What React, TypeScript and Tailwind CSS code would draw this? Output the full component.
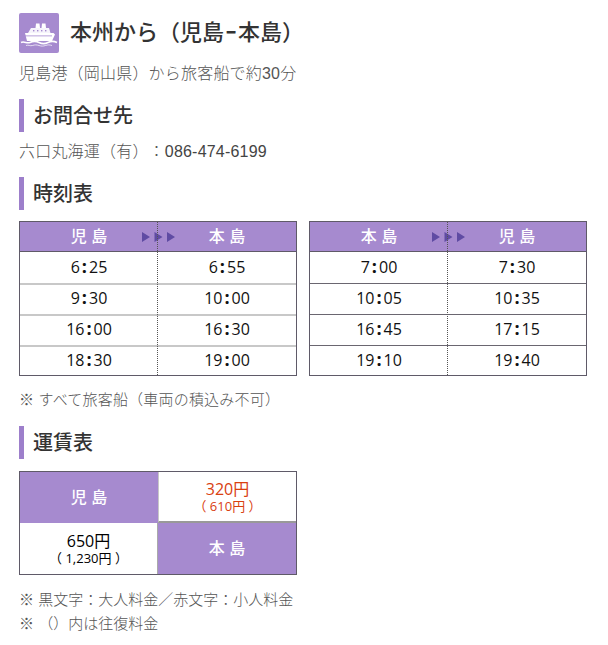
const cjk = "font-['Liberation_Sans','Noto_Sans_CJK_JP',sans-serif]";
const tableFont = "font-['Open_Sans','Noto_Sans_CJK_JP',sans-serif]";

const ShipIcon = () => (
  <svg viewBox="0 0 40 40" className="h-[40px] w-[40px]">
    <rect width="40" height="40" rx="2" fill="#a68acf" />
    <g fill="#fff">
      <path d="M17 10.500h3.500l.5 4.500h-4.500zM23 10.500h3.500l.5 4.500h-4.500z" />
      <path d="M12 15h18l1.500 5H9z" opacity="0.9" />
      <path d="M6 20h28.500l1.500 1.500-3 6.500H8z" />
    </g>
    <g fill="#a68acf">
      <rect x="14" y="17" width="1.400" height="1.400" />
      <rect x="18" y="17" width="1.400" height="1.400" />
      <rect x="22" y="17" width="1.400" height="1.400" />
      <rect x="26" y="17" width="1.400" height="1.400" />
      <rect x="6" y="22.500" width="27" height="0.800" />
    </g>
    <path d="M2 29.500c3-1.800 6 1.500 9 0s6-1.500 9 0 6 1.500 9 0 6-1.500 9 0" fill="none" stroke="#fff" strokeWidth="1.500" />
    <path d="M7 32.500c2.500-1 4 .8 6.500 0s4-.8 6.500 0 4 .8 6.500 0 4-.8 6.500 0" fill="none" stroke="#fff" strokeWidth="0.900" opacity="0.8" />
  </svg>
);

const Heading = ({ children }: { children: string }) => (
  <h2 className="flex h-[33px] items-center border-l-[5px] border-[#9d7fcb] pl-[9px] text-[20px] font-medium leading-none text-[#333]">
    {children}
  </h2>
);

const Arrows = () => (
  <svg viewBox="0 0 33 10" className="absolute left-[122px] top-[10px] h-[10px] w-[33px]">
    <path d="M0 0l8 5-8 5zM12.500 0l8 5-8 5zM25 0l8 5-8 5z" fill="#5f4ba3" />
  </svg>
);

const Time = ({ value }: { value: string }) => {
  const [h, m] = value.split(":");
  return (
    <div>
      {h}
      <span className="mx-[2px] text-[18px] font-bold leading-none">:</span>
      {m}
    </div>
  );
};

const Timetable = ({ from, to, rows, rowLine }: { from: string; to: string; rows: string[][]; rowLine: string }) => (
  <div className="relative w-[278px] border border-[#5f5a68]">
    <div className="relative grid h-[30px] grid-cols-2 border-b border-[#5f5a68] bg-[#a68acf] text-center text-[16px] font-medium leading-[29px] text-white">
      <div>{from}</div>
      <div>{to}</div>
      <Arrows />
    </div>
    {rows.map(([a, b], i) => (
      <div
        key={a}
        className={`${tableFont} grid grid-cols-2 text-center text-[16px] font-normal text-[#111] ${i > 0 ? rowLine : "leading-[31px]"} ${i === 3 ? "h-[30px]" : "h-[31px]"}`}
      >
        <Time value={a} />
        <Time value={b} />
      </div>
    ))}
    {/* dotted centre line */}
    <div className="absolute bottom-0 left-[137px] top-0 border-l border-dotted border-[#555]" />
  </div>
);

const outward = [
  ["6:25", "6:55"],
  ["9:30", "10:00"],
  ["16:00", "16:30"],
  ["18:30", "19:00"],
];
const inward = [
  ["7:00", "7:30"],
  ["10:05", "10:35"],
  ["16:45", "17:15"],
  ["19:10", "19:40"],
];

export default function App() {
  return (
    <div className={`${cjk} h-[645px] w-[608px] bg-white px-[19px] pt-[13px] text-[15px] font-light text-[#555] [text-spacing-trim:space-all]`}>
      <div className="flex items-center gap-[11px]">
        <ShipIcon />
        <h1 className="text-[22px] font-medium leading-[36px] text-[#333]">
          本州から（児島<span className="mx-[1.5px]">ｰ</span>本島）
        </h1>
      </div>
      <p className="mt-[10px] text-[16px] leading-[22px] tracking-[0.2px]">児島港（岡山県）から旅客船で約30分</p>

      <div className="mt-[14px]">
        <Heading>お問合せ先</Heading>
      </div>
      <p className="mt-[9px] text-[16px] leading-[22px] tracking-[0.2px]">
        六口丸海運（有）：<span className="text-[#444]">086-474-6199</span>
      </p>

      <div className="mt-[14px]">
        <Heading>時刻表</Heading>
      </div>
      <div className="mt-[11px] flex gap-[12px]">
        <Timetable from="児 島" to="本 島" rows={outward} rowLine="border-t-2 border-[#c8c8c8] leading-[27px]" />
        <Timetable from="本 島" to="児 島" rows={inward} rowLine="border-t border-[#6a6670] leading-[29px]" />
      </div>
      <p className="mt-[13px] leading-[22px] tracking-[0.2px]">※ すべて旅客船（車両の積込み不可）</p>

      <div className="mt-[15px]">
        <Heading>運賃表</Heading>
      </div>
      <div className={`${tableFont} mt-[12px] grid w-[278px] grid-cols-2 grid-rows-[51px_51px] border border-[#5f5a68] text-center`}>
        <div className={`${cjk} flex items-center justify-center bg-[#a68acf] text-[16px] font-medium text-white`}>児 島</div>
        <div className="flex flex-col items-center justify-center border-b-2 border-l border-b-[#999] border-l-[#c8c8c8] text-[#d9400f]">
          <span className="text-[16px] font-normal leading-[20px]">320円</span>
          <span className="text-[13px] font-normal leading-[15px]">（ 610円 ）</span>
        </div>
        <div className="flex flex-col items-center justify-center border-r border-[#aaa] text-black">
          <span className="text-[16px] font-normal leading-[20px]">650円</span>
          <span className="text-[13px] font-normal leading-[15px]">（ 1,230円 ）</span>
        </div>
        <div className={`${cjk} flex items-center justify-center bg-[#a68acf] text-[16px] font-medium text-white`}>本 島</div>
      </div>
      <p className="mt-[13px] leading-[24px]">※ 黒文字：大人料金／赤文字：小人料金</p>
      <p className="leading-[24px]">※ （）内は往復料金</p>
    </div>
  );
}
